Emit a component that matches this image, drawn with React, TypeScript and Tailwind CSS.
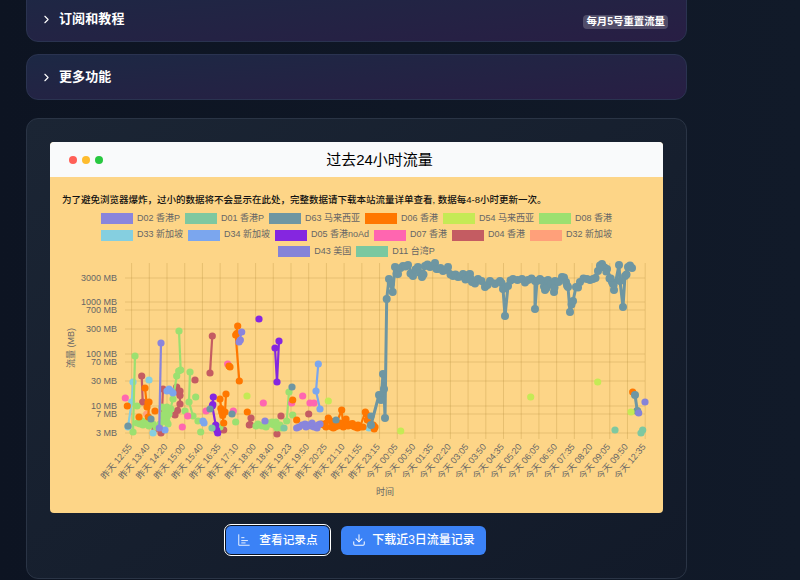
import { Download, ChevronRight } from "lucide-react";

type Pt = [number, number];
type Series = { color: string; lines?: Pt[][]; dots?: Pt[]; thick?: boolean };

const legend = [
  ["D02 香港P", "#8a85dc"],
  ["D01 香港P", "#7ec8a0"],
  ["D63 马来西亚", "#6e96a2"],
  ["D06 香港", "#ff7700"],
  ["D54 马来西亚", "#c5ea55"],
  ["D08 香港", "#9ce070"],
  ["D33 新加坡", "#85cfe0"],
  ["D34 新加坡", "#7ba6ee"],
  ["D05 香港noAd", "#8526e0"],
  ["D07 香港", "#ff66b0"],
  ["D04 香港", "#c45c62"],
  ["D32 新加坡", "#ffa07a"],
  ["D43 美国", "#8583d8"],
  ["D11 台湾P", "#7ac8a0"],
];

const yTicks: [string, number][] = [
  ["3000 MB", 279],
  ["1000 MB", 303],
  ["700 MB", 311],
  ["300 MB", 330],
  ["100 MB", 355],
  ["70 MB", 363],
  ["30 MB", 382],
  ["10 MB", 407],
  ["7 MB", 415],
  ["3 MB", 434],
];

const xTicks = [
  "昨天 12:55", "昨天 13:40", "昨天 14:20", "昨天 15:00", "昨天 15:40", "昨天 16:35",
  "昨天 17:10", "昨天 18:00", "昨天 18:40", "昨天 19:23", "昨天 19:50", "昨天 20:25",
  "昨天 21:10", "昨天 21:55", "昨天 23:15", "今天 00:05", "今天 00:50", "今天 01:35",
  "今天 02:20", "今天 03:05", "今天 03:50", "今天 04:35", "今天 05:20", "今天 06:05",
  "今天 06:50", "今天 07:35", "今天 08:20", "今天 09:05", "今天 09:50", "今天 12:35",
];

const main63: Pt[] = [
  [371, 426], [379, 396], [381, 401], [383, 375], [384, 390], [385, 419], [386.7, 300], [389, 280], [392.7, 293],
  [395, 268], [398, 275], [403, 267], [408, 266], [413, 277], [418, 268], [422, 278], [425, 267], [430, 268],
  [435, 264], [438, 270], [443, 272], [448, 268], [453, 277], [458, 278], [463, 275], [468, 280], [470, 275],
  [472, 283], [478, 280], [485, 288], [490, 282], [500, 282], [503, 290], [505, 317], [508, 287], [513, 280],
  [522, 280], [528, 281], [535, 282], [535, 310], [537, 282], [543, 282], [545, 291], [548, 281], [554, 293],
  [555, 282], [562, 278], [566, 283], [568, 288], [570, 313], [573, 302], [576, 288], [580, 283], [587, 280],
  [593, 280], [598, 272], [602, 265], [607, 270], [612, 283], [614, 291], [619, 266], [620, 282], [623, 308],
  [625, 277], [628, 268], [632, 269],
];

const series: Series[] = [
  {
    color: "#ffa07a",
    dots: [[146.7, 415]],
  },
  {
    color: "#c45c62",
    lines: [
      [[141.7, 377], [142.7, 403]],
      [[212.3, 337], [210, 374]],
      [[163, 390], [161, 434]],
      [[176.7, 388], [180, 392], [180, 405], [175, 416]],
      [[251, 419], [249.3, 426]],
    ],
    dots: [[195, 381], [223.7, 431], [281, 417], [277, 435], [308.7, 415], [155, 430]],
  },
  {
    color: "#85cfe0",
    lines: [[[133, 383], [131.7, 403], [128, 428]]],
    dots: [[149, 381], [153, 434], [369, 429]],
  },
  {
    color: "#9ce070",
    lines: [
      [[135, 357], [133, 433]],
      [[179, 332], [180.7, 371], [176.7, 377], [173, 400], [167, 423], [160, 425]],
      [[190, 373], [189, 403], [193, 417]],
      [[289, 393], [286.7, 422]],
    ],
    dots: [
      [137, 407], [140, 425], [143, 426], [146, 424], [149, 427], [153, 425], [156, 428], [185, 412], [195.7, 398],
      [198, 422], [200.7, 433], [235.7, 423], [258, 425], [262, 427], [266, 428], [270, 425], [274, 426], [277, 429],
      [280, 426], [292.7, 416], [220, 428], [169, 415], [171, 410], [264, 426], [256, 427], [281, 429],
      [162, 408], [165, 412], [167, 418], [272, 423], [276, 423], [163, 416], [167, 408], [163, 422], [168, 425],
      [137, 424], [142, 422], [150, 423], [268, 424],
    ],
  },
  {
    color: "#ff66b0",
    dots: [
      [125.3, 399], [182.3, 428], [187.7, 417], [206, 412], [227.7, 365], [233.3, 412], [263.3, 404], [302.7, 397],
      [310, 404], [314, 404], [291.7, 404],
    ],
  },
  {
    color: "#ff7700",
    lines: [
      [[145, 389], [147, 408], [149, 403], [148.3, 418]],
      [[220, 400], [221.7, 413], [223.7, 424]],
      [[226, 395], [225, 413]],
      [[237.7, 327], [235.7, 336], [239.3, 382]],
      [[321.7, 425], [328.3, 419], [331.7, 428], [335, 428], [341.7, 411], [343.3, 428], [346, 420], [350, 425], [355, 428], [360, 428], [365.3, 413], [367.3, 421], [373.3, 426], [375, 428]],
    ],
    dots: [
      [127.3, 407], [139, 418], [155, 412], [229, 367], [230, 368], [247.3, 413], [292.7, 401], [296.7, 421],
      [632.7, 393], [324, 426], [326, 428], [333, 425], [338, 427], [340, 424], [348, 427], [353, 427], [358, 426], [363, 428],
    ],
  },
  {
    color: "#7ba6ee",
    lines: [[[318.3, 365], [316, 392], [320, 410]]],
    dots: [[167, 392], [169, 390], [171, 392], [173, 394], [165, 431], [204, 424], [203, 422]],
  },
  {
    color: "#8a85dc",
    lines: [
      [[161, 344], [159.3, 429]],
      [[241.7, 333], [239, 343]],
    ],
    dots: [
      [265, 422], [296.7, 429], [299, 428], [302, 426], [305, 425], [308, 426], [311, 427], [314, 428], [317, 429], [320, 425],
      [306, 428], [312, 424], [318, 426],
    ],
  },
  {
    color: "#8526e0",
    lines: [
      [[213.3, 398], [212.3, 407], [215.7, 426], [217.7, 434]],
      [[275, 349], [277, 383], [279, 342]],
    ],
    dots: [[259, 320]],
  },
  {
    color: "#6e96a2",
    thick: true,
    lines: [main63, [[635, 396], [637.3, 412]]],
    dots: [[292, 388], [336, 421], [371, 417], [151, 420], [232, 415], [210, 410], [128, 427], [614, 286], [611, 279], [604, 268], [600, 268], [606, 273]],
  },
  {
    color: "#c5ea55",
    dots: [[247, 397], [597.7, 383], [530.7, 398], [400.7, 432], [631, 413], [328.3, 402]],
  },
  {
    color: "#7ec8a0",
    dots: [[615, 431], [642.7, 431], [641, 434], [284, 429], [212, 429]],
  },
  {
    color: "#8583d8",
    dots: [[645, 403], [638.7, 414]],
  },
];

// chart.js draws many close samples, fill the gaps with midpoints and a bit of wobble
function dense(line: Pt[]): Pt[] {
  const out: Pt[] = [];
  line.forEach((p, i) => {
    out.push(p);
    const next = line[i + 1];
    if (next && Math.abs(next[1] - p[1]) < 14) {
      const wobble = i % 3 === 0 ? 3 : i % 3 === 1 ? -2 : 1;
      out.push([(p[0] + next[0]) / 2, (p[1] + next[1]) / 2 + wobble]);
    }
  });
  return out;
}

function TrafficChart() {
  return (
    <svg viewBox="50 258 613 248" className="block w-[613px] h-[248px]">
      {yTicks.map(([label, y]) => (
        <g key={label}>
          <line x1={125} x2={645} y1={y} y2={y} stroke="#a9812f" strokeOpacity={0.32} strokeWidth={0.8} />
          <text x={117} y={y + 3} textAnchor="end" fontSize={9} fill="#666">
            {label}
          </text>
        </g>
      ))}
      {xTicks.map((label, i) => {
        const x = 131.6 + i * 17.71;
        return (
          <g key={label}>
            <line x1={x} x2={x} y1={264} y2={440} stroke="#a9812f" strokeOpacity={0.32} strokeWidth={0.8} />
            <text
              x={x + 1}
              y={448}
              textAnchor="end"
              fontSize={9}
              fill="#666"
              transform={`rotate(-50 ${x + 1} 448)`}
            >
              {label}
            </text>
          </g>
        );
      })}
      <text x={74} y={349} textAnchor="middle" fontSize={9} fill="#666" transform="rotate(-90 74 349)">
        流量 (MB)
      </text>
      <text x={385} y={496} textAnchor="middle" fontSize={9} fill="#666">
        时间
      </text>
      {series.map((s) => (
        <g key={s.color} fill={s.color} stroke={s.color}>
          {s.lines?.map((line, i) => (
            <g key={i}>
              <polyline
                points={line.map((p) => p.join(",")).join(" ")}
                fill="none"
                strokeWidth={s.thick ? 3 : 2.2}
                strokeLinejoin="round"
              />
              {dense(line).map((p, j) => (
                <circle key={j} cx={p[0]} cy={p[1]} r={s.thick ? 4 : 3.6} stroke="none" />
              ))}
            </g>
          ))}
          {s.dots?.map((p, i) => (
            <circle key={i} cx={p[0]} cy={p[1]} r={3.6} stroke="none" />
          ))}
        </g>
      ))}
    </svg>
  );
}

function Collapsed({ title, badge, className }: { title: string; badge?: string; className: string }) {
  return (
    <div
      className={`flex items-center justify-between pl-[13px] pr-[18px] rounded-xl border border-[#2a3350] bg-gradient-to-br from-[#1c2844] to-[#281e44] ${className}`}
    >
      <div className="flex items-center gap-[6px] text-white">
        <ChevronRight size={13} strokeWidth={2} />
        <span className="text-[13px] font-bold tracking-[0.1px]">{title}</span>
      </div>
      {badge && (
        <span className="mt-[6px] rounded-[4px] bg-white/20 px-[3px] py-px text-[10.4px] leading-[12px] font-bold text-white">
          {badge}
        </span>
      )}
    </div>
  );
}

export default function App() {
  return (
    <div className="h-[580px] overflow-hidden bg-gradient-to-r from-[#0d1422] to-[#111a29] font-['Liberation_Sans','Noto_Sans_CJK_SC',sans-serif]">
      <div className="ml-[26px] w-[661px] -mt-[16px] flex flex-col">
        <Collapsed title="订阅和教程" badge="每月5号重置流量" className="h-[58px] pt-[12px]" />
        <Collapsed title="更多功能" className="h-[46px] mt-3" />

        <div className="mt-[18px] h-[461px] rounded-xl border border-[#2a3445] bg-gradient-to-br from-[#1b2534] to-[#121a29] p-[23px] flex flex-col items-center">
          <div className="w-full h-[371px] rounded overflow-hidden bg-[#fdd587]">
            <div className="h-[35px] bg-[#f9fafb] flex items-center pl-[19px] pr-[19px]">
              <div className="flex gap-[5px]">
                <span className="w-2 h-2 rounded-full bg-[#ff5f57]" />
                <span className="w-2 h-2 rounded-full bg-[#febc2e]" />
                <span className="w-2 h-2 rounded-full bg-[#28c840]" />
              </div>
              <h2 className="flex-1 pl-3 text-center text-[15px] leading-[20px] text-black">过去24小时流量</h2>
            </div>
            <p className="pl-3 pt-4 text-[9.5px] leading-[13px] text-[#111] font-medium">
              为了避免浏览器爆炸，过小的数据将不会显示在此处，完整数据请下载本站流量详单查看, 数据每4-8小时更新一次。
            </p>
            <div className="mt-[7px] mx-auto w-[530px] flex flex-wrap justify-center gap-x-[5px] gap-y-[5.5px]">
              {legend.map(([name, color]) => (
                <div key={name} className="flex items-center gap-1 h-[11px] text-[9px] text-[#666] whitespace-nowrap">
                  <span className="w-8 h-[11px]" style={{ background: color }} />
                  {name}
                </div>
              ))}
            </div>
            <TrafficChart />
          </div>

          <div className="mt-3 mr-[2px] flex items-center gap-[11px]">
            <button className="h-[30px] w-[105px] rounded-md bg-[#3b82f6] flex items-center justify-center gap-2 text-[11.7px] font-medium text-white outline outline-[1.5px] outline-white border border-[#0b1220]">
              <svg width="14" height="14" viewBox="0 0 24 24" fill="none" stroke="currentColor" strokeWidth="1.5" strokeLinecap="round">
                <path d="M3 3v18h18M8 8h4M8 13h10M8 17h6" />
              </svg>
              查看记录点
            </button>
            <button className="h-[29px] w-[145px] rounded-md bg-[#3b82f6] flex items-center justify-center gap-[6px] text-[12px] font-medium text-white">
              <Download size={14} strokeWidth={1.75} />
              下载近3日流量记录
            </button>
          </div>
        </div>
      </div>
    </div>
  );
}
